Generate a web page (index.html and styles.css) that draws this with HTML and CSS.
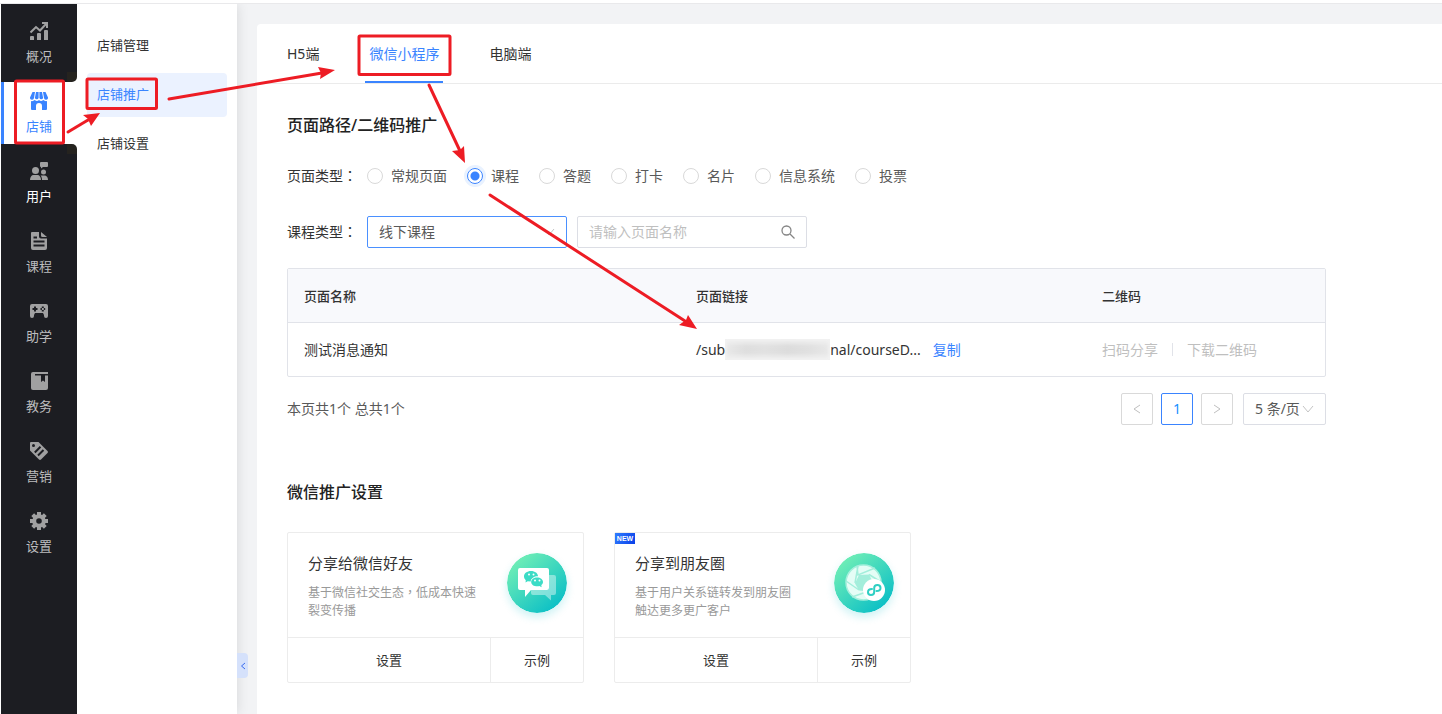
FILE: index.html
```html
<!DOCTYPE html>
<html lang="zh-CN">
<head>
<meta charset="utf-8">
<title>店铺推广</title>
<link rel="stylesheet" href="styles.css">
</head>
<body>
<div class="topbar"></div>
<div class="app">
  <nav class="sidebar">
    <a class="side-item" href="#">
      <svg class="side-icon" viewBox="0 0 18 18"><path d="M0 15a1 1 0 0 1 1-1h2a1 1 0 0 1 1 1v3H0zM7 12a1 1 0 0 1 1-1h2a1 1 0 0 1 1 1v6H7zM14 9a1 1 0 0 1 1-1h2a1 1 0 0 1 1 1v9h-4z"/><path class="line" d="M.5 10.500L6 5l4 3.500 6.500-7M12 1h5v5"/></svg>
      <span>概况</span>
    </a>
    <a class="side-item active" href="#">
      <svg class="side-icon" viewBox="0 0 18 18"><path d="M2.500 0H5L4 6a2 2 0 0 1-4-.5zM6 0h2.600v6a2 2 0 0 1-3.700 0zM9.400 0H12l1.100 6a2 2 0 0 1-3.700 0zM13 0h2.500L18 5.500a2 2 0 0 1-4 .5zM1 9q2 .5 3.800-1Q7 10 9 8q2 2 4.200 0Q15 9.500 17 9v8a1 1 0 0 1-1 1h-4v-4a3 3 0 0 0-6 0v4H2a1 1 0 0 1-1-1z"/></svg>
      <span>店铺</span>
    </a>
    <a class="side-item strong" href="#">
      <svg class="side-icon" viewBox="0 0 18 18"><circle cx="5.500" cy="8.500" r="3.500"/><path d="M0 18c0-3 1.500-5 3.500-5h4c2 0 3.500 2 3.500 5zM10 1a1 1 0 0 1 1-1h6a1 1 0 0 1 1 1v3a1 1 0 0 1-1 1h-4l-2 1.500V5a1 1 0 0 1-1-1zM12 18c0-2-.5-3.500-1.500-4.500h4c2 0 3.500 1.500 3.500 4.500z"/><circle cx="13.500" cy="10" r="2.500"/></svg>
      <span>用户</span>
    </a>
    <a class="side-item" href="#">
      <svg class="side-icon" viewBox="0 0 18 18"><path d="M2 0h7v4.500a2 2 0 0 0 2 2h6V16a2 2 0 0 1-2 2H3a2 2 0 0 1-2-2V1a1 1 0 0 1 1-1zM11 0l6 5h-4.500A1.500 1.500 0 0 1 11 3.500z"/><path class="cut" d="M3.500 5.500H7M3.500 9.500h11M3.500 13.500h11"/></svg>
      <span>课程</span>
    </a>
    <a class="side-item" href="#">
      <svg class="side-icon" viewBox="0 0 18 18"><path d="M2 2h14a2 2 0 0 1 2 2v10a2 2 0 0 1-4 0v-1l-1-2H5l-1 2v1a2 2 0 0 1-4 0V4a2 2 0 0 1 2-2z"/><path class="cut" d="M2.500 7h5M5 4.500v5M12.800 4.500v1.500M12.800 8v1.500M10.500 7h1.400M13.800 7h1.400"/></svg>
      <span>助学</span>
    </a>
    <a class="side-item" href="#">
      <svg class="side-icon" viewBox="0 0 18 18"><path d="M3 0h15v16a2 2 0 0 1-2 2H3a2 2 0 0 1-2-2V2a2 2 0 0 1 2-2z"/><path class="cut-fill" d="M5 2h13v1.500h-3V10l-2-1.500L11 10V3.500H5z"/></svg>
      <span>教务</span>
    </a>
    <a class="side-item" href="#">
      <svg class="side-icon" viewBox="0 0 18 18"><path d="M1 0h7.500l9 9a1.500 1.500 0 0 1 0 2l-6.500 6.500a1.500 1.500 0 0 1-2 0L0 8.500V1a1 1 0 0 1 1-1z"/><circle class="cut-fill" cx="3.500" cy="3.500" r="1.500"/><path class="cut" d="M4.800 10.500l5.700-5.700M8 13.500L13.500 8"/></svg>
      <span>营销</span>
    </a>
    <a class="side-item" href="#">
      <svg class="side-icon" viewBox="0 0 18 18"><circle class="gear-ring" cx="9" cy="9" r="4.800"/><path class="gear-teeth" d="M9 0v4M9 14v4M0 9h4M14 9h4M2.700 2.700l2.800 2.800M12.500 12.500l2.800 2.800M2.700 15.300l2.800-2.800M12.500 5.500l2.800-2.800"/></svg>
      <span>设置</span>
    </a>
  </nav>

  <nav class="submenu">
    <a class="sub-item" href="#">店铺管理</a>
    <a class="sub-item active" href="#">店铺推广</a>
    <a class="sub-item" href="#">店铺设置</a>
    <button class="collapse" type="button" aria-label="收起菜单"><svg viewBox="0 0 6 8"><path d="M5 1L1.500 4 5 7"/></svg></button>
  </nav>

  <main class="main">
    <div class="panel">
      <nav class="tabs">
        <a class="tab" href="#">H5端</a>
        <a class="tab active" href="#">微信小程序</a>
        <a class="tab" href="#">电脑端</a>
      </nav>
      <div class="content">
        <h2 class="title">页面路径/二维码推广</h2>
        <div class="form-row radios" role="radiogroup" aria-labelledby="page-type">
          <span class="form-label" id="page-type">页面类型<span class="centered" lang="zh-TW">：</span></span>
          <label class="radio"><input type="radio" name="type">常规页面</label>
          <label class="radio"><input type="radio" name="type" checked>课程</label>
          <label class="radio"><input type="radio" name="type">答题</label>
          <label class="radio"><input type="radio" name="type">打卡</label>
          <label class="radio"><input type="radio" name="type">名片</label>
          <label class="radio"><input type="radio" name="type">信息系统</label>
          <label class="radio"><input type="radio" name="type">投票</label>
        </div>
        <div class="form-row">
          <label class="form-label" for="course-type">课程类型<span class="centered" lang="zh-TW">：</span></label>
          <div class="select-box focused">
            <select id="course-type"><option>线下课程</option></select>
            <svg class="chevron" viewBox="0 0 12 8"><path d="M1 1l5 6 5-6"/></svg>
          </div>
          <div class="search-box">
            <input type="text" placeholder="请输入页面名称" aria-label="页面名称">
            <svg class="search-icon" viewBox="0 0 14 14"><circle cx="5.500" cy="5.500" r="4.500"/><path d="M9 9l4.500 4.500"/></svg>
          </div>
        </div>

        <table class="table">
          <thead><tr><th class="col-name">页面名称</th><th class="col-link">页面链接</th><th>二维码</th></tr></thead>
          <tbody><tr>
            <td>测试消息通知</td>
            <td><div class="link-cell"><span>/sub</span><span class="mosaic"></span><span>nal/courseD...</span><a class="copy" href="#">复制</a></div></td>
            <td><div class="code-cell"><button type="button" disabled>扫码分享</button><button type="button" disabled>下载二维码</button></div></td>
          </tr></tbody>
        </table>

        <div class="pager">
          <span class="summary">本页共1个 总共1个</span>
          <button class="page" type="button" aria-label="上一页"><svg viewBox="0 0 8 12"><path d="M7 2L1 6l6 4"/></svg></button>
          <button class="page current" type="button">1</button>
          <button class="page" type="button" aria-label="下一页"><svg viewBox="0 0 8 12"><path d="M1 2l6 4-6 4"/></svg></button>
          <div class="select-box page-size">
            <select aria-label="每页条数"><option>5 条/页</option></select>
            <svg class="chevron" viewBox="0 0 12 8"><path d="M1 1l5 6 5-6"/></svg>
          </div>
        </div>

        <h2 class="title promo-title">微信推广设置</h2>
        <div class="cards">
          <section class="card">
            <div class="card-body">
              <div>
                <h3>分享给微信好友</h3>
                <p>基于微信社交生态<span class="centered" lang="zh-TW">，</span>低成本快速<br>裂变传播</p>
              </div>
              <svg class="badge-icon" viewBox="0 0 60 60">
                <defs><linearGradient id="g1" x1="0.15" y1="0.1" x2="0.85" y2="0.9"><stop offset="0" stop-color="#6feeb6"/><stop offset="1" stop-color="#0bbfc6"/></linearGradient></defs>
                <circle cx="30" cy="30" r="30" fill="url(#g1)"/>
                <path fill="#fff" fill-opacity=".42" d="M42 22h5a2 2 0 0 1 2 2v16a2 2 0 0 1-2 2h-3v5.500L38 42H26a2 2 0 0 1-2-2v-3h16a2 2 0 0 0 2-2z"/>
                <path fill="#fff" d="M13 15h27a2 2 0 0 1 2 2v18a2 2 0 0 1-2 2H24l-6 7v-7h-5a2 2 0 0 1-2-2V17a2 2 0 0 1 2-2z"/>
                <path fill="#3cdcc6" d="M24 18c4 0 7 2.300 7 5.300-4 0-7 2-7.300 5.200l-3-.2-2.200 1.200.3-2.300c-1.200-1-1.800-2.300-1.800-3.900 0-3 3-5.300 7-5.300z"/>
                <path fill="#3cdcc6" d="M30 24.500c3.400 0 6 2 6 4.400 0 1.400-.7 2.400-1.700 3.200l.3 2.200-2.200-1.200c-4.500.8-8.200-1.200-8.200-4.200 0-2.400 2.500-4.400 5.800-4.400z"/>
                <g fill="#fff"><circle cx="22" cy="21.500" r="1"/><circle cx="26.500" cy="21.500" r="1"/><circle cx="28" cy="27.500" r="1"/><circle cx="32.500" cy="27.500" r="1"/></g>
              </svg>
            </div>
            <div class="card-foot"><button type="button">设置</button><button type="button">示例</button></div>
          </section>
          <section class="card">
            <span class="new-tag">NEW</span>
            <div class="card-body">
              <div>
                <h3>分享到朋友圈</h3>
                <p>基于用户关系链转发到朋友圈<br>触达更多更广客户</p>
              </div>
              <svg class="badge-icon" viewBox="0 0 60 60">
                <circle cx="30" cy="30" r="30" fill="url(#g1)"/>
                <circle cx="29.500" cy="29.500" r="17.500" fill="#e5fdf6" stroke="#a6efdc" stroke-width="1.500"/>
                <path fill="#a3eedb" d="M25 22l10-.5 4 8-4 9-10-1-4-7z"/>
                <path fill="none" stroke="#a3eedb" stroke-width="1.500" d="M23 13l1 9 17-7M35 21.500L47 29M35 38l-17 6M25 37L12 28M21 30l3-17"/>
                <circle cx="40" cy="37" r="11" fill="#fff"/>
                <path fill="none" stroke="#2fcfc3" stroke-width="2" stroke-linecap="round" d="M38 36c-2.500 0-4 1.400-4 3.200 0 1.700 1.500 2.800 3 2.800 1.800 0 3.200-1.200 3.200-3v-4c0-1.800 1.400-3 3.200-3 1.700 0 3.100 1.200 3.100 2.900s-1.500 3.100-4 3.100"/>
              </svg>
            </div>
            <div class="card-foot"><button type="button">设置</button><button type="button">示例</button></div>
          </section>
        </div>
      </div>
    </div>
  </main>
</div>

<svg class="annotations" width="1442" height="714" viewBox="0 0 1442 714" aria-hidden="true">
  <g class="mark-box"><rect x="15.500" y="81" width="48" height="62" rx="1"/><rect x="87" y="79" width="69.500" height="29.500" rx="1"/><rect x="359" y="36" width="91" height="38.500" rx="1"/></g>
  <g class="mark-line"><path d="M68 132L88 120"/><path d="M169 99L322 73"/><path d="M429 85L460 151"/><path d="M490 195L685 321"/></g>
  <g class="mark-head"><path d="M100 113L83 115l5 4 3 7z"/><path d="M335 70L318 67l3 6-1 6z"/><path d="M465 163l-1-17-4 4-8 1z"/><path d="M697 329l-9-14-2 5-7 5z"/></g>
</svg>
</body>
</html>
```
FILE: styles.css
```css
* { box-sizing: border-box; }

body {
  margin: 0;
  min-height: 100vh;
  display: flex;
  flex-direction: column;
  position: relative;
  background: #fff;
  color: #333;
  font: 14px/20px "Noto Sans", "Noto Sans CJK SC", sans-serif;
}

a { color: inherit; text-decoration: none; }
button, input, select { font: inherit; color: inherit; }
button { padding: 0; border: 0; background: none; }
svg { display: block; flex: none; }

.topbar { height: 4px; border-bottom: 1px solid #e9e9eb; }
.app { flex: 1; display: flex; padding-left: 1px; background: #fff; }

/* primary navigation */
.sidebar {
  width: 76px;
  flex: none;
  padding-top: 8px;
  display: flex;
  flex-direction: column;
  gap: 8px;
  background: #1c1d22;
  position: relative;
  z-index: 2;
}
.side-item {
  height: 62px;
  padding-top: 10px;
  display: flex;
  flex-direction: column;
  align-items: center;
  gap: 6px;
  position: relative;
  font-size: 13px;
  color: #bdbdbf;
}
.side-icon { width: 18px; height: 18px; fill: #a0a0a1; }
.side-icon .line { fill: none; stroke: #a0a0a1; stroke-width: 2; }
.side-icon .cut { fill: none; stroke: #1c1d22; stroke-width: 2; }
.side-icon .cut-fill { fill: #1c1d22; }
.gear-ring, .gear-teeth { fill: none; stroke: #a0a0a1; stroke-width: 4; }
.side-item.strong { color: #fff; }
.side-item.active { background: #fff; color: #3a84ff; box-shadow: inset 3px 0 #3a84ff; }
.side-item.active .side-icon { fill: #3a84ff; }
.side-item.active::before,
.side-item.active::after {
  content: "";
  position: absolute;
  right: 0;
  width: 10px;
  height: 10px;
  background: #25231f;
}
.side-item.active::before { bottom: 100%; border-radius: 0 0 5px 0; box-shadow: 2px 2px #fff; }
.side-item.active::after { top: 100%; border-radius: 0 5px 0 0; box-shadow: 2px -2px #fff; }

/* secondary navigation */
.submenu {
  width: 160px;
  flex: none;
  padding: 20px 10px;
  display: flex;
  flex-direction: column;
  gap: 5px;
  background: #fff;
  box-shadow: 0 0 12px rgba(0, 0, 0, .12);
  clip-path: inset(0 -20px 0 0);
  position: relative;
  z-index: 1;
}
.sub-item { padding: 11px 10px 13px; border-radius: 4px; font-size: 13px; }
.sub-item.active { background: #ebf2ff; color: #3a84ff; }
.collapse {
  position: absolute;
  left: 100%;
  bottom: 36px;
  width: 11px;
  height: 25px;
  display: grid;
  place-items: center;
  border-radius: 0 4px 4px 0;
  background: #d5e1fb;
}
.collapse svg { width: 6px; height: 8px; fill: none; stroke: #3a6cf0; }

/* page panel */
.main { flex: 1; min-width: 0; display: flex; padding: 20px 0 0 20px; background: #f2f3f5; }
.panel { flex: 1; min-width: 0; background: #fff; border-radius: 4px 0 0 0; }
.tabs { display: flex; gap: 42px; padding: 0 26px; border-bottom: 1px solid #ebebeb; }
.tab { padding: 20px 4px 17px; border-bottom: 2px solid transparent; }
.tab.active { color: #3a84ff; border-color: #3a84ff; }
.content { padding: 29px 116px 30px 30px; }
.title { margin: 0; font-size: 16px; line-height: 24px; font-weight: 500; color: #222; }

.form-row { display: flex; align-items: center; height: 32px; margin-top: 24px; }
.form-row.radios { margin-top: 23px; }
.form-label { width: 80px; flex: none; }
.centered { font-family: "Noto Sans CJK TC", sans-serif; line-height: 1; }
.radio { display: flex; align-items: center; gap: 8px; margin-right: 20px; color: #595959; }
.radio input {
  appearance: none;
  width: 16px;
  height: 16px;
  margin: 0;
  border: 1px solid #d9d9d9;
  border-radius: 50%;
  background: #fff;
}
.radio input:checked {
  border-color: #3a84ff;
  background: radial-gradient(circle, #3a84ff 4px, #fff 5px);
  box-shadow: 0 0 0 3px #e9f2ff;
}
.select-box, .search-box {
  display: flex;
  align-items: center;
  height: 32px;
  border: 1px solid #dcdee5;
  border-radius: 2px;
  color: #595959;
  position: relative;
}
.select-box { width: 200px; margin-right: 10px; }
.select-box.focused { border-color: #4a90ff; }
.select-box select {
  appearance: none;
  flex: 1;
  min-width: 0;
  height: 30px;
  padding: 0 11px;
  border: 0;
  background: none;
  outline: 0;
}
.chevron { position: absolute; right: 11px; width: 12px; height: 8px; fill: none; stroke: #c4c4c4; pointer-events: none; }
.search-box { width: 230px; padding-right: 11px; }
.search-box input { flex: 1; min-width: 0; padding: 0 11px; border: 0; background: none; outline: 0; }
.search-box input::placeholder { color: #bfbfbf; opacity: 1; }
.search-icon { width: 14px; height: 14px; fill: none; stroke: #858585; stroke-width: 1.300; }

.table {
  width: 100%;
  margin-top: 20px;
  table-layout: fixed;
  border-collapse: separate;
  border-spacing: 0;
  border: 1px solid #e1e3e9;
  border-radius: 2px;
}
.table th, .table td { height: 54px; padding: 0 16px; text-align: left; }
.table th { background: #f8f9fc; border-bottom: 1px solid #e1e3e9; font-size: 13px; font-weight: 500; }
.table td { height: 53px; }
.col-name { width: 392px; }
.col-link { width: 406px; }
.link-cell, .code-cell { display: flex; align-items: center; white-space: nowrap; }
.mosaic {
  width: 105px;
  height: 21px;
  background: linear-gradient(90deg, #e9e9e9, #dedede 20%, #e1e1e1 38%, #dcdcdc 60%, #e0e0e0 80%, #e8e8e8);
  box-shadow: inset 0 4px 5px #f2f2f2, inset 0 -4px 5px #f2f2f2;
}
.copy { margin-left: 12px; color: #3a84ff; }
.code-cell button { color: #bfbfbf; }
.code-cell button + button { margin-left: 14px; padding-left: 15px; background: linear-gradient(#e1e3e9, #e1e3e9) 0 50% / 1px 13px no-repeat; }

.pager { display: flex; align-items: center; gap: 8px; margin-top: 16px; }
.summary { flex: 1; color: #595959; }
.page { width: 32px; height: 32px; display: grid; place-items: center; border: 1px solid #d9d9d9; border-radius: 2px; }
.page svg { width: 8px; height: 12px; fill: none; stroke: #bfbfbf; }
.page.current { border-color: #3a84ff; color: #1890ff; }
.page-size { width: 83px; margin: 0 0 0 2px; }

.promo-title { margin-top: 55px; }
.cards { display: flex; flex-wrap: wrap; gap: 30px; margin-top: 28px; }
.card { width: 297px; border: 1px solid #ececec; border-radius: 2px; position: relative; }
.card-body { display: flex; justify-content: space-between; height: 104px; padding: 20px 16px 0 20px; }
.card h3 { margin: 0 0 11px; font-size: 15px; line-height: 20px; font-weight: 400; }
.card p { margin: 0; font-size: 12px; line-height: 18px; color: #999; white-space: nowrap; }
.badge-icon { width: 60px; height: 60px; border-radius: 50%; box-shadow: 0 4px 8px rgba(11, 191, 198, .2); }
.card-foot { display: grid; grid-template-columns: 202px 1fr; border-top: 1px solid #ececec; }
.card-foot button { height: 44px; font-size: 13px; }
.card-foot button + button { border-left: 1px solid #ececec; }
.new-tag {
  position: absolute;
  top: 0;
  left: 0;
  width: 20px;
  height: 11px;
  background: linear-gradient(120deg, #2f7dff, #0a3fe8);
  color: #fff;
  font: 700 7px/11px "Liberation Sans", sans-serif;
  text-align: center;
}

/* guide arrows drawn over the page */
.annotations { position: absolute; top: 0; left: 0; z-index: 5; pointer-events: none; }
.mark-box { fill: none; stroke: #ed1c24; stroke-width: 3; }
.mark-line { fill: none; stroke: #ed1c24; stroke-width: 3; stroke-linecap: round; }
.mark-head { fill: #ed1c24; }
```
